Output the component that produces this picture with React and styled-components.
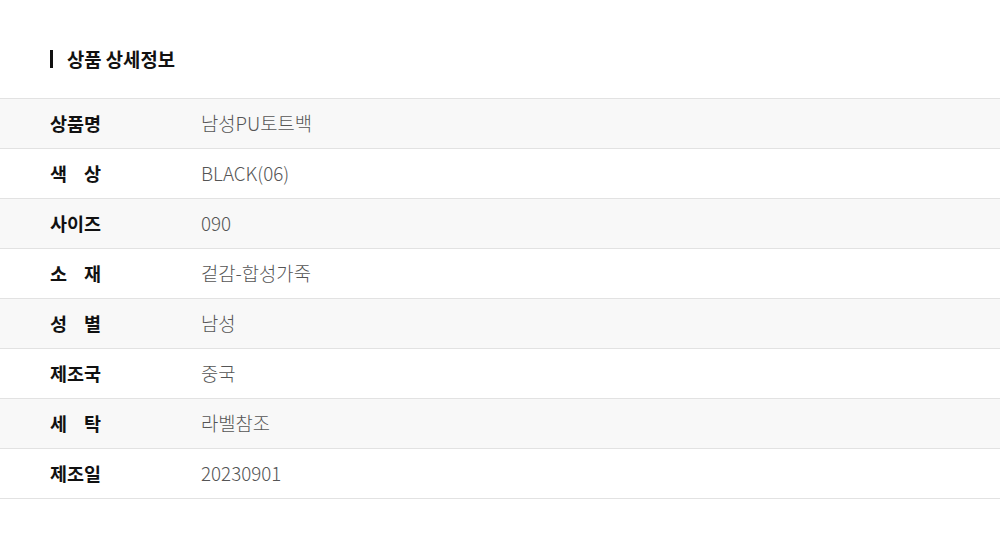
import React from "react";
import styled, { createGlobalStyle } from "styled-components";

const Global = createGlobalStyle`
  html, body { margin: 0; padding: 0; background: #fff; }
  body { font-family: "Noto Sans CJK KR", "Noto Sans", sans-serif; }
`;

const Wrap = styled.section`
  width: 1000px;
  padding-top: 46px;
`;

const Title = styled.h2`
  margin: 0 0 26px 50px;
  display: flex;
  align-items: center;
  gap: 14px;
  font-size: 18.8px;
  font-weight: 700;
  color: #111;
  line-height: 26px;
  &::before {
    content: "";
    width: 3px;
    height: 18px;
    background: #111;
  }
`;

const Table = styled.div`
  border-top: 1px solid #e2e2e2;
`;

const Row = styled.div`
  display: flex;
  align-items: center;
  box-sizing: border-box;
  height: 50px;
  padding-bottom: 2px;
  border-bottom: 1px solid #e2e2e2;
  background: ${(p) => (p.$shade ? "#f8f8f8" : "#fff")};
  font-size: 18.5px;
  line-height: 24px;
`;

const Label = styled.div`
  width: 51px;
  margin-left: 50px;
  margin-right: 100px;
  font-weight: 700;
  color: #111;
  text-align: justify;
  text-align-last: justify;
  white-space: nowrap;
`;

const Value = styled.div`
  color: #555;
  font-weight: 300;
  font-size: 18.8px;
`;

const rows = [
  ["상품명", "남성PU토트백"],
  ["색 상", "BLACK(06)"],
  ["사이즈", "090"],
  ["소 재", "겉감-합성가죽"],
  ["성 별", "남성"],
  ["제조국", "중국"],
  ["세 탁", "라벨참조"],
  ["제조일", "20230901"],
];

export default function App() {
  return (
    <Wrap>
      <Global />
      <Title>상품 상세정보</Title>
      <Table>
        {rows.map(([k, v], i) => (
          <Row key={k} $shade={i % 2 === 0}>
            <Label>{k}</Label>
            <Value>{v}</Value>
          </Row>
        ))}
      </Table>
    </Wrap>
  );
}
